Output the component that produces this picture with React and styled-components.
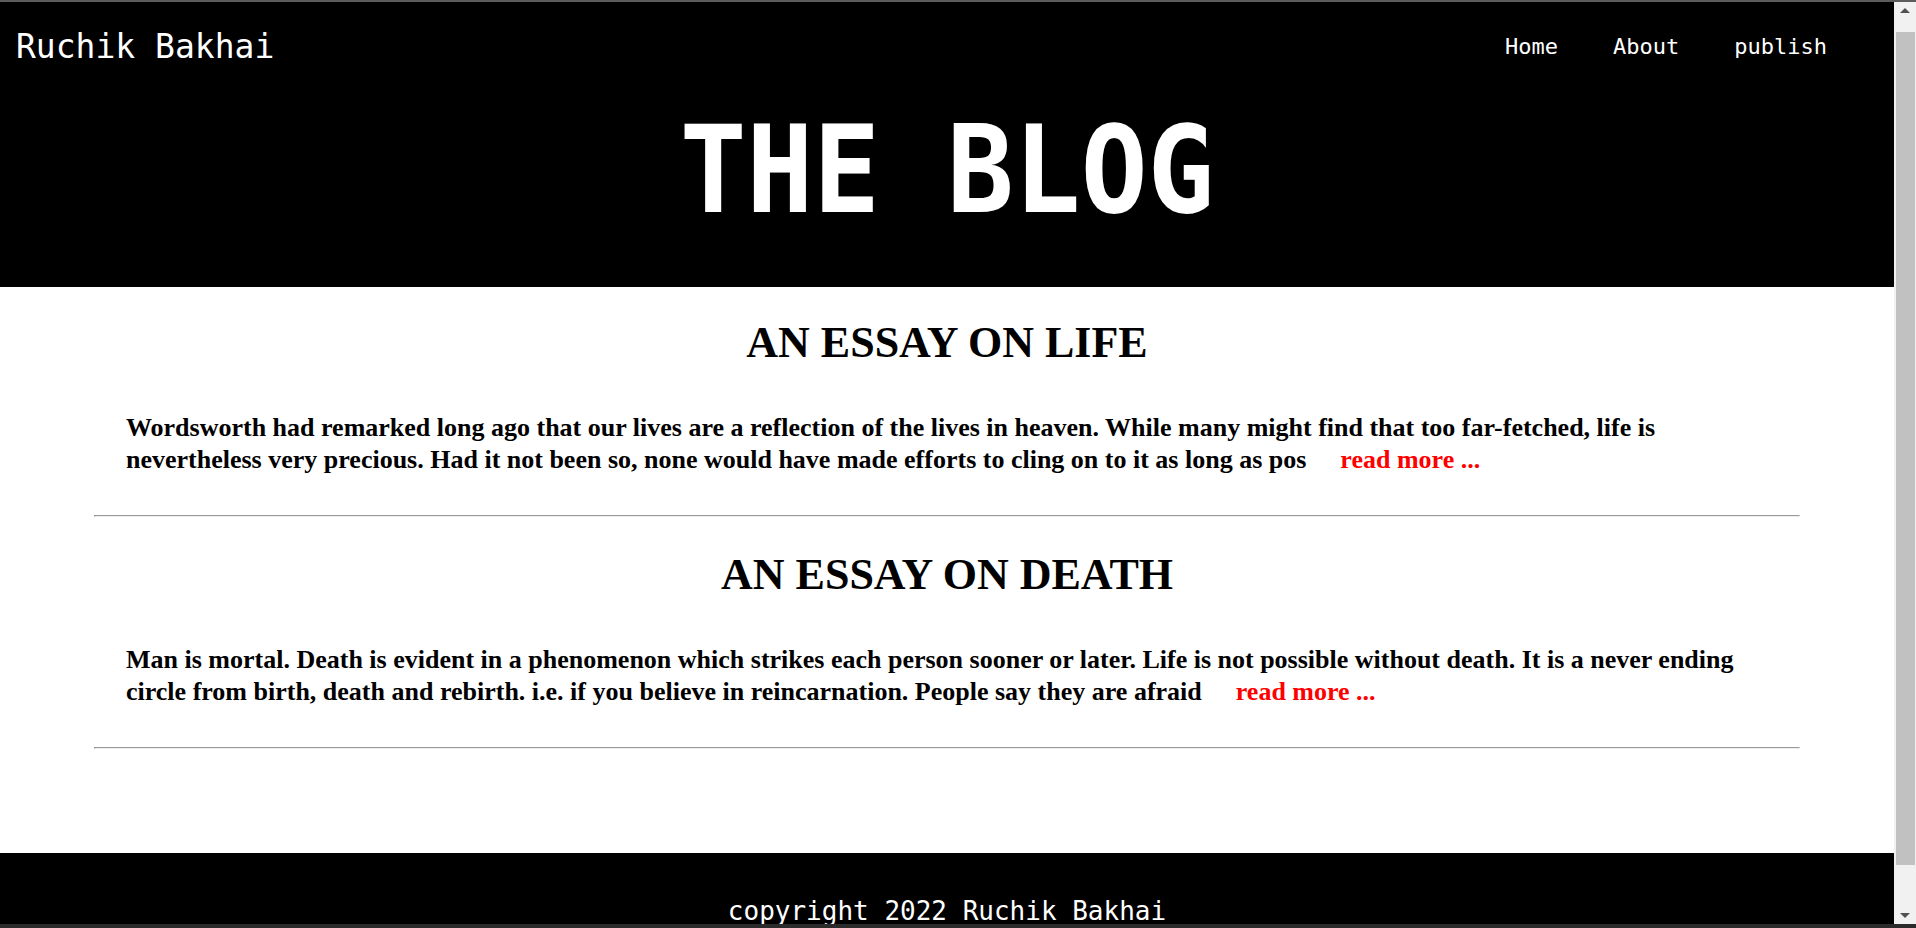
import styled, { createGlobalStyle } from "styled-components";

const GlobalStyle = createGlobalStyle`
    html, body {
        margin: 0;
        padding: 0;
        background: #ffffff;
    }
    body {
        font-family: "Liberation Serif", "Times New Roman", serif;
    }
`;

// browser window: top edge, page + scrollbar, bottom edge
const Frame = styled.div`
    display: flex;
    flex-direction: column;
    height: 100vh;
    overflow: hidden;
    border-top: 2px solid #5c5c5c;
    box-sizing: border-box;
`;

const Viewport = styled.div`
    display: flex;
    flex: 1;
    min-height: 0;
    overflow: hidden;
`;

const BottomEdge = styled.div`
    height: 4px;
    flex-shrink: 0;
    background: #2b2b2b;
`;

const Page = styled.div`
    flex: 1;
    min-width: 0;
`;

const ScrollBar = styled.div`
    display: flex;
    flex-direction: column;
    align-items: stretch;
    width: 22px;
    flex-shrink: 0;
    background: #f1f1f1;
`;

const ScrollArrow = styled.div`
    display: flex;
    justify-content: center;
    align-items: center;
    height: 17px;
    margin-top: ${(p) => (p.$down ? "auto" : "0")};

    &::before {
        content: "";
        border-left: 5px solid transparent;
        border-right: 5px solid transparent;
        border-bottom: ${(p) => (p.$down ? "0" : "5px solid #505050")};
        border-top: ${(p) => (p.$down ? "5px solid #505050" : "0")};
    }
`;

const ScrollThumb = styled.div`
    height: 833px;
    margin: 13px 1px 0 2px;
    background: #c1c1c1;
`;

const Header = styled.header`
    display: flex;
    flex-direction: column;
    background: #000000;
    color: #ffffff;
    height: 285px;
    font-family: "DejaVu Sans Mono", monospace;
`;

const TopBar = styled.div`
    display: flex;
    justify-content: space-between;
    align-items: center;
    padding: 25px 67px 0 16px;
`;

const Logo = styled.div`
    font-size: 33px;
`;

const Nav = styled.nav`
    display: flex;
    gap: 55px;
`;

const NavLink = styled.a`
    color: #ffffff;
    font-size: 22px;
    text-decoration: none;
    cursor: pointer;
`;

const Title = styled.h1`
    margin: 49px 0 0;
    text-align: center;
    font-size: 111px;
    font-weight: 700;
    line-height: 1;
    transform: scaleY(1.09);
`;

const Main = styled.main`
    display: flex;
    flex-direction: column;
    padding-bottom: 104px;
`;

const Post = styled.article`
    display: flex;
    flex-direction: column;
`;

const PostTitle = styled.h2`
    margin: ${(p) => (p.$first ? "30px" : "32px")} 0 0;
    text-align: center;
    font-size: 44px;
    font-weight: 700;
`;

const Excerpt = styled.p`
    margin: 44px 0 0;
    padding: 0 126px;
    font-size: 26px;
    font-weight: 700;
    line-height: 32px;
`;

const ReadMore = styled.a`
    margin-left: 34px;
    color: #ff0000;
    text-decoration: none;
    cursor: pointer;
`;

const Divider = styled.hr`
    width: 90%;
    margin: 39px auto 0;
`;

const Footer = styled.footer`
    display: flex;
    justify-content: center;
    background: #000000;
    color: #ffffff;
    height: 100px;
    padding-top: 43px;
    box-sizing: border-box;
    font-family: "DejaVu Sans Mono", monospace;
    font-size: 26px;
`;

const posts = [
    {
        title: "AN ESSAY ON LIFE",
        text: "Wordsworth had remarked long ago that our lives are a reflection of the lives in heaven. While many might find that too far-fetched, life is nevertheless very precious. Had it not been so, none would have made efforts to cling on to it as long as pos",
    },
    {
        title: "AN ESSAY ON DEATH",
        text: "Man is mortal. Death is evident in a phenomenon which strikes each person sooner or later. Life is not possible without death. It is a never ending circle from birth, death and rebirth. i.e. if you believe in reincarnation. People say they are afraid",
    },
];

const App = () => {
    return (
        <>
            <GlobalStyle />
            <Frame>
                <Viewport>
                    <Page>
                        <Header>
                            <TopBar>
                                <Logo>Ruchik Bakhai</Logo>
                                <Nav>
                                    <NavLink>Home</NavLink>
                                    <NavLink>About</NavLink>
                                    <NavLink>publish</NavLink>
                                </Nav>
                            </TopBar>
                            <Title>THE BLOG</Title>
                        </Header>

                        <Main>
                            {posts.map((post, i) => (
                                <Post key={post.title}>
                                    <PostTitle $first={i === 0}>{post.title}</PostTitle>
                                    <Excerpt>
                                        {post.text}
                                        <ReadMore>read more ...</ReadMore>
                                    </Excerpt>
                                    <Divider />
                                </Post>
                            ))}
                        </Main>

                        <Footer>copyright 2022 Ruchik Bakhai</Footer>
                    </Page>

                    <ScrollBar>
                        <ScrollArrow />
                        <ScrollThumb />
                        <ScrollArrow $down />
                    </ScrollBar>
                </Viewport>
                <BottomEdge />
            </Frame>
        </>
    );
};

export default App;
